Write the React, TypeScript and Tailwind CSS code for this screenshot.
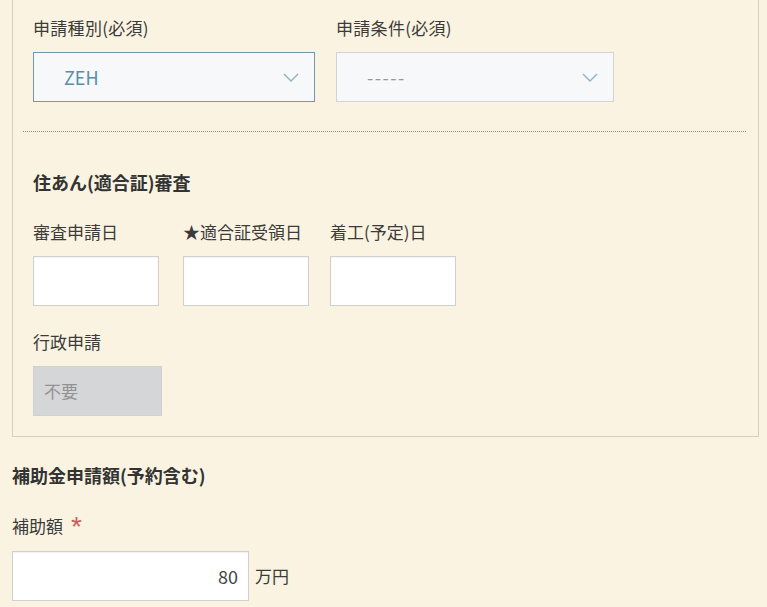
import React from "react";

/*
  申請フォーム（一部）
  - 上：申請種別 / 申請条件 のセレクト
  - 中：住あん(適合証)審査
  - 下：補助金申請額
*/

const font = "font-['Noto_Sans_CJK_JP','Noto_Sans',sans-serif]";

const Chevron: React.FC = () => (
  <svg width="16" height="9" viewBox="0 0 16 9" fill="none" className="shrink-0">
    <polyline points="1,1 8,8 15,1" stroke="#8fb1c2" strokeWidth="1.4" />
  </svg>
);

const SelectBox: React.FC<{ value: string; active?: boolean; width: string; muted?: boolean }> = ({
  value,
  active,
  width,
  muted,
}) => (
  <div
    className={`${width} h-[50px] flex items-center justify-between pl-[30px] pr-[15px] bg-[#f6f8fa] border ${
      active ? "border-[#6f9aa6]" : "border-[#d3d3d3]"
    }`}
  >
    <span className={`text-[18px] leading-none ${muted ? "text-[#8c9aa5] tracking-[1.5px]" : "text-[#5b8ea6]"}`}>
      {value}
    </span>
    <Chevron />
  </div>
);

const DateInput: React.FC<{ label: string; className?: string }> = ({ label, className }) => (
  <div className={`flex flex-col ${className ?? ""}`}>
    <span className="text-[17px] leading-[24px] text-[#3b3b3b] whitespace-nowrap">{label}</span>
    <div className="mt-[12px] w-[126px] h-[50px] bg-white border border-[#d0d0d0] shadow-[inset_0_1px_2px_rgba(0,0,0,0.06)]" />
  </div>
);

const App: React.FC = () => {
  return (
    <div className={`min-h-screen w-full bg-[#faf3e1] ${font} pl-[12px] pr-[8px]`}>
      {/* 審査パネル */}
      <section className="border border-t-0 border-[#d4cec0] pt-[16px] pb-[20px]">
        <div className="flex pl-[20px]">
          <div className="flex flex-col">
            <span className="text-[17px] leading-[24px] text-[#3b3b3b] tracking-[0.3px]">申請種別(必須)</span>
            <div className="mt-[12px]">
              <SelectBox value="ZEH" active width="w-[282px]" />
            </div>
          </div>
          <div className="flex flex-col ml-[21px]">
            <span className="text-[17px] leading-[24px] text-[#3b3b3b] tracking-[0.3px]">申請条件(必須)</span>
            <div className="mt-[12px]">
              <SelectBox value="-----" muted width="w-[278px]" />
            </div>
          </div>
        </div>

        {/* 区切り線 */}
        <div className="ml-[10px] mr-[12px] mt-[29px] border-t border-dotted border-[#8a8a8a]" />

        <div className="pl-[20px]">
          <h3 className="mt-[38px] text-[18px] leading-[24px] font-bold text-[#333]">住あん(適合証)審査</h3>

          <div className="flex mt-[26px]">
            <DateInput label="審査申請日" />
            <DateInput label="★適合証受領日" className="ml-[24px]" />
            <DateInput label="着工(予定)日" className="ml-[21px]" />
          </div>

          <div className="flex flex-col mt-[24px]">
            <span className="text-[17px] leading-[24px] text-[#3b3b3b]">行政申請</span>
            <div className="mt-[12px] w-[129px] h-[50px] flex items-center pl-[10px] bg-[#d5d6d8] border border-[#d0d0d0]">
              <span className="text-[17px] text-[#929292]">不要</span>
            </div>
          </div>
        </div>
      </section>

      {/* 補助金申請額 */}
      <div className="pb-[6px]">
        <h3 className="mt-[26px] text-[18px] leading-[24px] font-bold text-[#333]">補助金申請額(予約含む)</h3>
        <div className="mt-[27px] h-[24px] flex items-start gap-[8px] text-[17px] leading-[24px] text-[#3b3b3b]">
          <span>補助額</span>
          <span className="relative top-[1px] text-[#cf5a57] text-[28px] leading-[24px] font-['Liberation_Sans',sans-serif] font-light">*</span>
        </div>
        <div className="mt-[13px] flex items-center">
          <div className="w-[237px] h-[50px] bg-white border border-[#d0d0d0] shadow-[inset_0_1px_2px_rgba(0,0,0,0.06)] flex items-center justify-end pr-[10px]">
            <span className="text-[18px] text-[#444]">80</span>
          </div>
          <span className="ml-[6px] text-[17px] text-[#3b3b3b]">万円</span>
        </div>
      </div>
    </div>
  );
};

export default App;
